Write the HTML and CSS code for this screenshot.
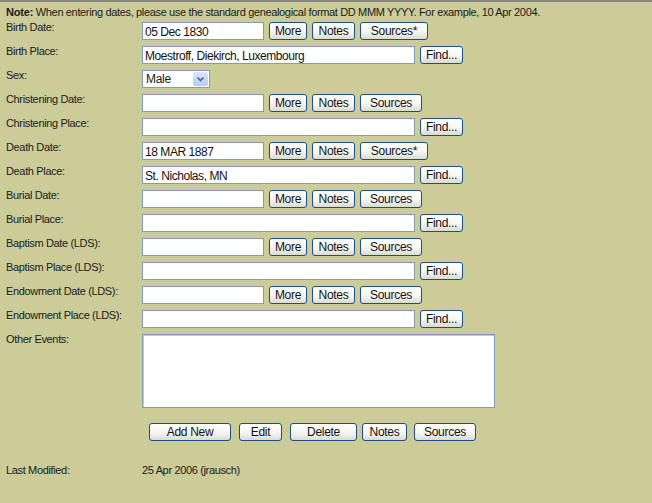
FILE: index.html
```html
<!DOCTYPE html>
<html>
<head>
<meta charset="utf-8">
<link rel="stylesheet" href="styles.css">
</head>
<body>
<div class="page">
  <p class="note"><b>Note:</b> When entering dates, please use the standard genealogical format DD MMM YYYY. For example, 10 Apr 2004.</p>
  <div class="form">
    <div class="label">Birth Date:</div>
    <div class="field"><input class="date" type="text" value="05 Dec 1830"><button class="b-more">More</button><button class="b-note">Notes</button><button class="b-srcs">Sources*</button></div>

    <div class="label">Birth Place:</div>
    <div class="field"><input class="place" type="text" value="Moestroff, Diekirch, Luxembourg"><button class="b-find">Find...</button></div>

    <div class="label">Sex:</div>
    <div class="field"><span class="select"><span class="select-text">Male</span><span class="select-arrow"><svg width="15" height="16" viewBox="0 0 15 16"><path d="M4.5 6.5 L7.5 9.5 L10.5 6.5" fill="none" stroke="#4d6185" stroke-width="1.6"/></svg></span></span></div>

    <div class="label">Christening Date:</div>
    <div class="field"><input class="date" type="text"><button class="b-more">More</button><button class="b-note">Notes</button><button class="b-src">Sources</button></div>

    <div class="label">Christening Place:</div>
    <div class="field"><input class="place" type="text"><button class="b-find">Find...</button></div>

    <div class="label">Death Date:</div>
    <div class="field"><input class="date" type="text" value="18 MAR 1887"><button class="b-more">More</button><button class="b-note">Notes</button><button class="b-srcs">Sources*</button></div>

    <div class="label">Death Place:</div>
    <div class="field"><input class="place" type="text" value="St. Nicholas, MN"><button class="b-find">Find...</button></div>

    <div class="label">Burial Date:</div>
    <div class="field"><input class="date" type="text"><button class="b-more">More</button><button class="b-note">Notes</button><button class="b-src">Sources</button></div>

    <div class="label">Burial Place:</div>
    <div class="field"><input class="place" type="text"><button class="b-find">Find...</button></div>

    <div class="label">Baptism Date (LDS):</div>
    <div class="field"><input class="date" type="text"><button class="b-more">More</button><button class="b-note">Notes</button><button class="b-src">Sources</button></div>

    <div class="label">Baptism Place (LDS):</div>
    <div class="field"><input class="place" type="text"><button class="b-find">Find...</button></div>

    <div class="label">Endowment Date (LDS):</div>
    <div class="field"><input class="date" type="text"><button class="b-more">More</button><button class="b-note">Notes</button><button class="b-src">Sources</button></div>

    <div class="label">Endowment Place (LDS):</div>
    <div class="field"><input class="place" type="text"><button class="b-find">Find...</button></div>

    <div class="label">Other Events:</div>
    <div class="field"><textarea class="events"></textarea></div>
  </div>

  <div class="actions">
    <button class="b-add">Add New</button>
    <button class="b-edit">Edit</button>
    <button class="b-delete">Delete</button>
    <button class="b-notes">Notes</button>
    <button class="b-sources">Sources</button>
  </div>

  <div class="modified">
    <div class="mod-label">Last Modified:</div>
    <div class="value">25 Apr 2006 (jrausch)</div>
  </div>
</div>
</body>
</html>
```

FILE: styles.css
```css
html, body {
  margin: 0;
  padding: 0;
  background: #cccc99;
}
body {
  font-family: "Liberation Sans", Arial, sans-serif;
  font-size: 11px;
  letter-spacing: -0.35px;
  color: #1a1a1a;
  border-top: 2px solid #85857c;
  min-height: 501px;
}
.page {
  padding: 3px 6px 0 6px;
}
.note {
  margin: 0 0 3px 0;
  line-height: 14px;
}
.note b { letter-spacing: -0.2px; }
.form {
  display: grid;
  grid-template-columns: 136px 1fr;
  row-gap: 6px;
}
.label {
  line-height: 13px;
  margin-top: -1px;
}
.field {
  display: flex;
  align-items: center;
  height: 18px;
}
.field input {
  box-sizing: border-box;
  height: 18px;
  border: 1px solid #7f9db9;
  background: #fff;
  font-family: "Liberation Sans", Arial, sans-serif;
  font-size: 12px;
  letter-spacing: -0.45px;
  padding: 1px 2px 0 2px;
  margin: 0 5px 0 0;
  color: #111;
}
input.date { width: 122px; }
input.place { width: 273px; }
button {
  box-sizing: border-box;
  height: 18px;
  border: 1px solid #1c4f86;
  border-radius: 3px;
  background: linear-gradient(#ffffff, #f3f3ee 60%, #dcdad0);
  font-family: "Liberation Sans", Arial, sans-serif;
  font-size: 12px;
  letter-spacing: -0.3px;
  color: #111;
  padding: 0;
  margin: 0 5px 0 0;
  line-height: 14px;
  text-align: center;
}
.b-more { width: 38px; }
.b-note { width: 43px; }
.b-src { width: 62px; }
.b-srcs { width: 68px; }
.b-find { width: 43px; }
.select {
  position: relative;
  box-sizing: border-box;
  display: inline-block;
  width: 68px;
  height: 18px;
  border: 1px solid #7f9db9;
  background: #fff;
  font-size: 12px;
  letter-spacing: -0.3px;
}
.select-text {
  display: block;
  padding: 1px 0 0 3px;
  line-height: 14px;
}
.select-arrow {
  position: absolute;
  right: 1px;
  top: 1px;
  width: 15px;
  height: 14px;
  background: linear-gradient(#dbe6fb, #b8cbf2);
  border-radius: 2px;
  overflow: hidden;
}
.select-arrow svg { display: block; margin-top: -1px; }
.events {
  box-sizing: border-box;
  width: 353px;
  height: 74px;
  border: 1px solid #7f9db9;
  box-shadow: inset 1px 1px 0 #c8c8c8;
  background: #fff;
  resize: none;
  margin: 0;
}
.form .field:last-child { height: 74px; align-items: flex-start; }
.actions {
  display: flex;
  padding: 15px 0 0 143px;
}
.b-add { width: 82px; margin-right: 8px; }
.b-edit { width: 43px; margin-right: 8px; }
.b-delete { width: 67px; margin-right: 5px; }
.b-notes { width: 45px; margin-right: 7px; }
.b-sources { width: 62px; margin-right: 0; }
.modified {
  display: grid;
  grid-template-columns: 136px 1fr;
  padding-top: 23px;
  line-height: 13px;
}
```
